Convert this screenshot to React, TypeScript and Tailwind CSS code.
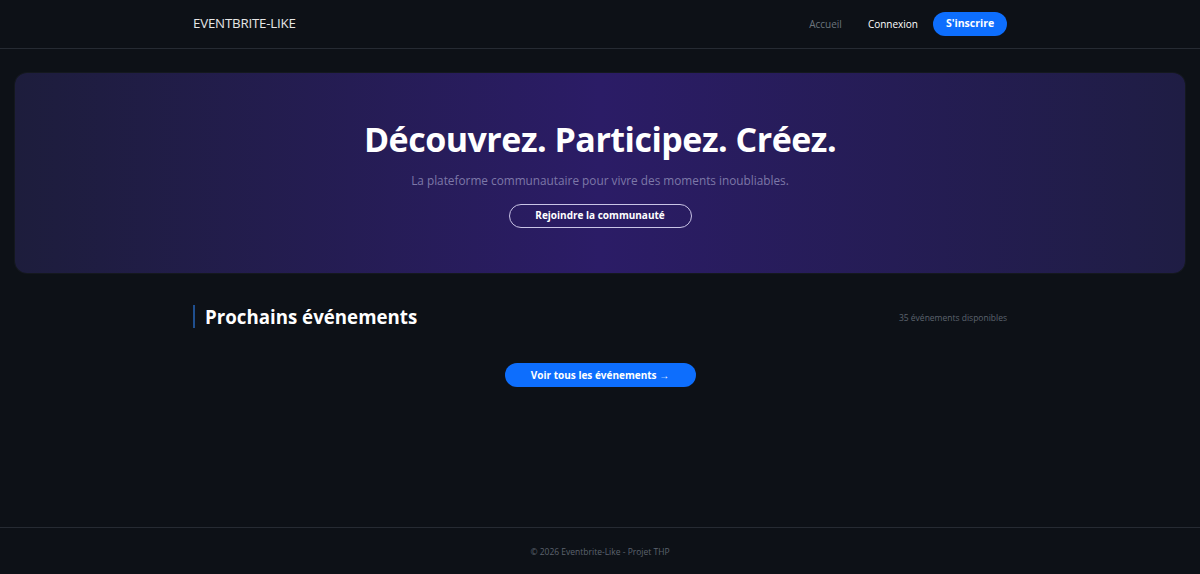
export default function App() {
  return (
    <div className="flex min-h-screen flex-col bg-[#0d1117] font-['Open_Sans',sans-serif] text-white">
      {/* Navbar */}
      <nav className="h-[49px] border-b border-[#262b33]">
        <div className="mx-auto flex h-full w-[814px] items-center justify-between">
          <span className="text-[13.3px] tracking-[-0.2px] text-[#e6e6e6]">EVENTBRITE-LIKE</span>
          <div className="flex items-center">
            <a href="#" className="text-[10px] text-[#6c757d]">Accueil</a>
            <a href="#" className="ml-[26px] text-[10px] text-white">Connexion</a>
            <button className="ml-[15px] h-[24px] w-[74px] rounded-full bg-[#0d6efd] text-[10.5px] font-bold text-white">
              S'inscrire
            </button>
          </div>
        </div>
      </nav>

      {/* Hero */}
      <section className="mx-[15px] mt-[24px] flex h-[200px] flex-col items-center justify-center rounded-xl bg-[linear-gradient(90deg,#1d1d3c_0%,#2b1c66_50%,#1f1d44_100%)] shadow-[0_0_0_1px_rgba(255,255,255,0.03)]">
        <h1 className="mt-[4px] text-[34px] leading-none font-bold tracking-[-0.5px] text-white">
          Découvrez. Participez. Créez.
        </h1>
        <p className="mt-[16px] text-[11.8px] text-[#7d78a8]">
          La plateforme communautaire pour vivre des moments inoubliables.
        </p>
        <button className="mt-[14px] h-[24px] w-[183px] rounded-full border border-[#c9c4e6] text-[10px] font-bold text-white">
          Rejoindre la communauté
        </button>
      </section>

      {/* Events */}
      <main className="flex-1">
        <div className="mx-auto mt-[32px] w-[814px]">
          <div className="flex items-center justify-between">
            <h2 className="border-l-2 border-[#1f4f8f] pl-[10px] text-[18.7px] leading-[23px] font-bold text-white">
              Prochains événements
            </h2>
            <span className="mt-[4px] text-[8.5px] text-[#5c636e]">35 événements disponibles</span>
          </div>
          <div className="mt-[35px] flex justify-center">
            <button className="h-[24px] w-[191px] rounded-full bg-[#0d6efd] text-[10px] font-bold text-white">
              Voir tous les événements →
            </button>
          </div>
        </div>
      </main>

      {/* Footer */}
      <footer className="flex h-[47px] items-center justify-center border-t border-[#262b33]">
        <span className="mt-[3px] text-[8.5px] text-[#5c636e]">© 2026 Eventbrite-Like - Projet THP</span>
      </footer>
    </div>
  )
}
